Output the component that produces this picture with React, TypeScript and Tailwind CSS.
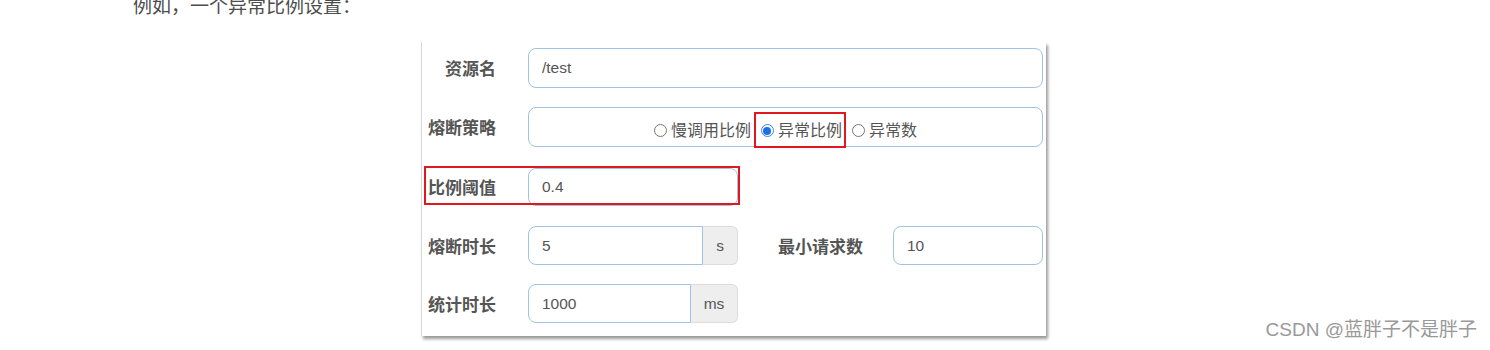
import React from "react"

const cjk = "font-['Liberation_Sans','Noto_Sans_CJK_SC',sans-serif]"

function Label({ text, className = "" }: { text: string; className?: string }) {
  return (
    <div className={`w-[74px] shrink-0 pt-[4px] text-right text-[17px] font-bold text-[#555] ${className}`}>{text}</div>
  )
}

function Radio({ label, checked }: { label: string; checked?: boolean }) {
  return (
    <span className="flex items-center gap-[4px]">
      {checked ? (
        <span className="flex h-[13px] w-[13px] items-center justify-center rounded-full border border-[#3b82f6] bg-white">
          <span className="h-[8px] w-[8px] rounded-full bg-[#1e6fe0]" />
        </span>
      ) : (
        <span className="h-[13px] w-[13px] rounded-full border border-[#777] bg-white" />
      )}
      <span>{label}</span>
    </span>
  )
}

export default function App() {
  return (
    <div className={`relative h-[350px] overflow-hidden bg-white ${cjk}`}>
      <p className="-mt-[6px] pl-[133px] text-[19px] leading-[25px] text-[#4d4d4d]">例如，一个异常比例设置：</p>

      <div className="ml-[421px] mt-[23px] h-[294px] w-[625px] border-l border-[#d8d8d8] bg-white pt-[6px] shadow-[2px_3px_3px_rgba(0,0,0,0.4)]">
        {/* 资源名 */}
        <div className="flex h-[40px] items-center">
          <Label text="资源名" />
          <div className="ml-[32px] flex h-[40px] w-[515px] items-center rounded-[8px] border-[1.5px] border-[#9fc3e4] px-[13px] text-[15.5px] text-[#555]">
            /test
          </div>
        </div>

        {/* 熔断策略 */}
        <div className="mt-[19px] flex h-[40px] items-center">
          <Label text="熔断策略" />
          <div className="ml-[32px] flex h-[40px] w-[515px] items-center justify-center gap-[10px] rounded-[8px] border-[1.5px] border-[#9fc3e4] pt-[7px] text-[16px] text-[#555]">
            <Radio label="慢调用比例" />
            <span className="relative">
              <Radio label="异常比例" checked />
              <span className="absolute -bottom-[5px] -left-[7px] -right-[4px] -top-[7px] border-2 border-[#e0191f]" />
            </span>
            <Radio label="异常数" />
          </div>
        </div>

        {/* 比例阈值 */}
        <div className="relative mt-[21px] flex h-[38px] items-center">
          <Label text="比例阈值" />
          <div className="ml-[32px] flex h-[38px] w-[210px] items-center rounded-[8px] border-[1.5px] border-[#9fc3e4] px-[13px] text-[15.5px] text-[#555]">
            0.4
          </div>
          <span className="absolute -top-[2px] left-[2px] h-[39px] w-[316px] border-2 border-[#e0191f]" />
        </div>

        {/* 熔断时长 / 最小请求数 */}
        <div className="mt-[20px] flex h-[39px] items-center">
          <Label text="熔断时长" />
          <div className="ml-[32px] flex h-[39px]">
            <div className="flex w-[175px] items-center rounded-l-[8px] border-[1.5px] border-[#9fc3e4] px-[13px] text-[15.5px] text-[#555]">
              5
            </div>
            <div className="flex w-[35px] items-center justify-center rounded-r-[6px] border border-l-0 border-[#dcdcdc] bg-[#eeeeee] text-[15.5px] text-[#555]">
              s
            </div>
          </div>
          <Label text="最小请求数" className="w-[125px]" />
          <div className="ml-[30px] flex h-[39px] w-[150px] items-center rounded-[8px] border-[1.5px] border-[#9fc3e4] px-[13px] text-[15.5px] text-[#555]">
            10
          </div>
        </div>

        {/* 统计时长 */}
        <div className="mt-[19px] flex h-[39px] items-center">
          <Label text="统计时长" />
          <div className="ml-[32px] flex h-[39px]">
            <div className="flex w-[163px] items-center rounded-l-[8px] border-[1.5px] border-[#9fc3e4] px-[13px] text-[15.5px] text-[#555]">
              1000
            </div>
            <div className="flex w-[47px] items-center justify-center rounded-r-[6px] border border-l-0 border-[#dcdcdc] bg-[#eeeeee] text-[15.5px] text-[#555]">
              ms
            </div>
          </div>
        </div>
      </div>

      <div className="absolute right-[13px] top-[316px] text-[19px] text-[#999]">CSDN @蓝胖子不是胖子</div>
    </div>
  )
}
